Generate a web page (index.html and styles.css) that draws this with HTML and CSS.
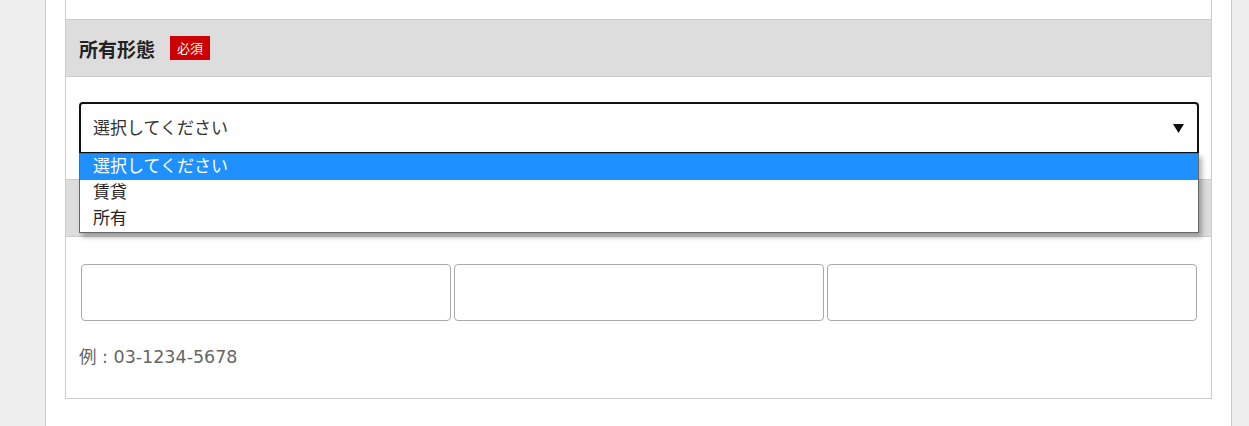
FILE: index.html
```html
<!DOCTYPE html>
<html lang="ja">
<head>
    <meta charset="UTF-8">
    <title>お問い合わせフォーム</title>
    <link rel="stylesheet" href="styles.css">
</head>
<body>
    <div class="page">
        <div class="form-table">
            <div class="row-body row-prev"></div>

            <div class="row-head">
                <span class="label">所有形態</span>
                <span class="required">必須</span>
            </div>
            <div class="row-body">
                <div class="select-wrap">
                    <div class="select">
                        <span class="select-text">選択してください</span>
                        <svg class="arrow" width="11" height="9" viewBox="0 0 11 9">
                            <polygon points="0,0 11,0 5.5,9" fill="#111"/>
                        </svg>
                    </div>
                    <ul class="options">
                        <li class="active">選択してください</li>
                        <li>賃貸</li>
                        <li>所有</li>
                    </ul>
                </div>
            </div>

            <!-- header hidden under the open dropdown -->
            <div class="row-head"></div>
            <div class="row-body row-tel">
                <div class="tel-group">
                    <input type="text">
                    <input type="text">
                    <input type="text">
                </div>
                <p class="note">例 : 03-1234-5678</p>
            </div>
        </div>
    </div>
</body>
</html>
```

FILE: styles.css
```css
html, body {
    height: 100%;
}
body {
    margin: 0;
    background-color: #eeeeee;
    font-family: "Noto Sans CJK JP", "Noto Sans", sans-serif;
    color: #333;
}
.page {
    margin-left: 45px;
    width: 1147px;
    min-height: 100%;
    padding: 0 19px;
    background-color: #fff;
    border-left: 1px solid #ccc;
    border-right: 1px solid #ccc;
    overflow: hidden;
}
.form-table {
    margin-top: -41px;
    border: 1px solid #ccc;
}
.row-prev {
    height: 59px;
    padding: 0 !important;
}
.row-head {
    display: flex;
    align-items: center;
    gap: 15px;
    height: 56px;
    padding: 0 13px;
    background-color: #dddddd;
    border-bottom: 1px solid #ccc;
}
.label {
    font-size: 19px;
    font-weight: bold;
    color: #222;
}
.required {
    display: inline-block;
    padding: 0 7px;
    height: 24px;
    line-height: 24px;
    background-color: #cc0000;
    color: #fff;
    font-size: 13px;
}
.row-body {
    padding: 25px 12px 25px 13px;
    border-bottom: 1px solid #ccc;
}
.row-body:last-child {
    border-bottom: none;
}
.select-wrap {
    position: relative;
}
.select {
    display: flex;
    align-items: center;
    justify-content: space-between;
    height: 48px;
    padding: 0 13px 0 12px;
    border: 2px solid #111;
    border-radius: 4px 4px 0 0;
    font-size: 17px;
    color: #333;
}
.select-text {
    margin-bottom: 4px;
}
.arrow {
    display: block;
}
.options {
    position: absolute;
    top: 51px;
    left: 0;
    right: 0;
    z-index: 2;
    margin: 0;
    padding: 0;
    list-style: none;
    background-color: #fff;
    border: 1px solid #666;
    box-shadow: 3px 4px 5px rgba(0, 0, 0, 0.3);
}
.options li {
    height: 26px;
    line-height: 21px;
    padding-left: 13px;
    font-size: 17px;
    color: #222;
}
.options li.active {
    background-color: #1e90ff;
    color: #fff;
}
.row-tel {
    padding-top: 27px;
    padding-bottom: 29px;
}
.tel-group {
    display: grid;
    grid-template-columns: 1fr 1fr 1fr;
    gap: 3px;
    padding: 0 2px;
}
.tel-group input {
    box-sizing: border-box;
    height: 57px;
    width: 100%;
    border: 1px solid #aaa;
    border-radius: 4px;
    margin: 0;
}
.note {
    margin: 24px 0 0;
    line-height: 24px;
    font-family: "DejaVu Sans", "Noto Sans CJK JP", sans-serif;
    font-size: 17.5px;
    color: #666;
}
```
